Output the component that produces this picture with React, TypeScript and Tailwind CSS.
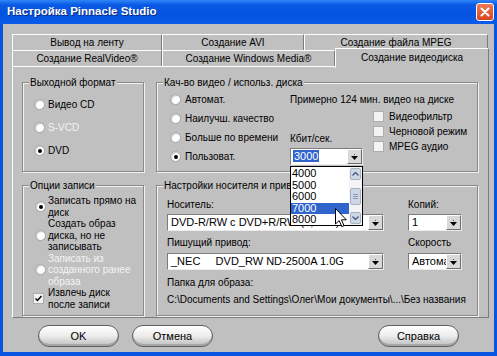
import React from 'react'

const grey = 'bg-[#c0c0c0]'

function Radio({ checked }: { checked?: boolean }) {
  return (
    <span className="w-[11px] h-[11px] rounded-full bg-white border border-[#a4a4a4] shadow-[inset_1px_1px_1px_#c8c8c8] flex items-center justify-center shrink-0">
      {checked && <span className="w-[4px] h-[4px] rounded-full bg-black" />}
    </span>
  )
}

function Check({ checked }: { checked?: boolean }) {
  return (
    <span className="w-[11px] h-[11px] bg-[#f3f3f3] border border-[#adadad] flex items-center justify-center shrink-0">
      {checked && (
        <svg width="7" height="7" viewBox="0 0 7 7">
          <path d="M0.5 3.5 L2.5 5.5 L6.5 1" stroke="#000" strokeWidth="1.5" fill="none" />
        </svg>
      )}
    </span>
  )
}

function DropBtn() {
  return (
    <span className="w-[15px] h-full bg-[#d8d8d8] border border-t-white border-l-white border-r-[#6e6e6e] border-b-[#6e6e6e] flex flex-col items-center justify-center shrink-0">
      <span className="w-[1px] h-[1px] bg-[#555] mb-[1px]" />
      <svg width="7" height="4" viewBox="0 0 7 4">
        <path d="M0 0 H7 L3.5 4 Z" fill="#000" />
      </svg>
    </span>
  )
}

function Combo({ value, children, wide }: { value: React.ReactNode; children?: React.ReactNode; wide?: boolean }) {
  return (
    <div
      className={
        wide
          ? 'relative h-[17px] w-full bg-white border border-t-[#7c7c7c] border-l-[#7c7c7c] border-r-[#ececec] border-b-[#ececec] flex items-center text-[11px]'
          : 'relative h-[17px] w-[54px] bg-white border border-t-[#7c7c7c] border-l-[#7c7c7c] border-r-[#ececec] border-b-[#ececec] flex items-center text-[11px]'
      }
    >
      <span className="flex-1 pl-[3px] overflow-hidden whitespace-pre leading-[13px]">{value}</span>
      <DropBtn />
      {children}
    </div>
  )
}

function Group({ label, children, className }: { label: string; children: React.ReactNode; className?: string }) {
  return (
    <div className={`relative border border-[#8a8a8a] shadow-[inset_1px_1px_0_#f2f2f2,1px_1px_0_#f2f2f2] ${className ?? ''}`}>
      <span className="absolute -top-[7px] left-[6px] px-[1px] bg-[#c0c0c0] leading-[13px] whitespace-nowrap">{label}</span>
      {children}
    </div>
  )
}

function Tab({ label, w }: { label: string; w: string }) {
  return (
    <div className={`${w} h-[16px] border-t border-l border-t-white border-l-white border-r border-r-[#7c7c7c] flex items-center justify-center leading-[13px] whitespace-nowrap`}>
      {label}
    </div>
  )
}

function Button({ label }: { label: string }) {
  return (
    <button className="w-[81px] h-[22px] rounded-[11px] border border-[#5e5e5e] bg-gradient-to-b from-white via-[#ececec] to-[#bdbdbd] shadow-[inset_0_-2px_0_#a6a6a6,inset_0_1px_0_#fff] leading-[13px] text-black text-[11px]">
      {label}
    </button>
  )
}

function ScrollBtn({ up }: { up?: boolean }) {
  return (
    <span className="h-[12px] mx-[1px] rounded-[2px] bg-[#cfd6e4] border border-[#a7b1c6] flex items-center justify-center">
      <svg width="7" height="4" viewBox="0 0 7 4">
        <path d={up ? 'M0.5 3.5 L3.5 0.5 L6.5 3.5' : 'M0.5 0.5 L3.5 3.5 L6.5 0.5'} stroke="#4a5e86" strokeWidth="1.4" fill="none" />
      </svg>
    </span>
  )
}

export default function App() {
  return (
    <div className="w-[497px] h-[356px] bg-[#0a55df] flex flex-col font-['Liberation_Sans',Arial,sans-serif] text-[10px] text-black overflow-hidden">
      {/* Title bar */}
      <div className="h-[24px] shrink-0 bg-[linear-gradient(180deg,#2f86f6_0%,#0a5ae6_20%,#0453e0_60%,#0a5ce8_100%)] flex items-center justify-between pl-[7px] pr-[3px]">
        <span className="text-white font-bold text-[11.5px] [text-shadow:1px_1px_0_#0b2a80]">Настройка Pinnacle Studio</span>
        <span className="w-[18px] h-[18px] rounded-[3px] border border-white bg-gradient-to-b from-[#ec7a55] to-[#d8431d] flex items-center justify-center">
          <svg width="10" height="10" viewBox="0 0 10 10">
            <path d="M1.5 1.5 L8.5 8.5 M8.5 1.5 L1.5 8.5" stroke="#fff" strokeWidth="2" strokeLinecap="round" />
          </svg>
        </span>
      </div>

      {/* Body */}
      <div className={`flex-1 ${grey} mx-[3px] mb-[4px] pt-[10px] pl-[9px] pr-[5px] flex flex-col`}>
        {/* Tabs */}
        <div className="flex">
          <Tab label="Вывод на ленту" w="w-[150px]" />
          <Tab label="Создание AVI" w="w-[142px]" />
          <Tab label="Создание файла MPEG" w="w-[184px]" />
        </div>
        <div className="flex items-end h-[16px]">
          <Tab label="Создание RealVideo®" w="w-[150px]" />
          <Tab label="Создание Windows Media®" w="w-[173px]" />
          <div className="relative z-10 w-[154px] h-[20px] -mb-[2px] bg-[#c0c0c0] border-t border-l border-t-white border-l-white border-r border-r-[#7c7c7c] flex items-center justify-center leading-[13px] pb-[2px]">
            Создание видеодиска
          </div>
        </div>

        {/* Panel */}
        <div className="h-[252px] border border-t-white border-l-white border-r-[#7c7c7c] border-b-[#7c7c7c] pt-[15px] pl-[9px] pr-[10px] grid grid-cols-[122px_322px] grid-rows-[90px_131px] gap-x-[12px] gap-y-[13px]">
          <Group label="Выходной формат" className="pt-[10px] pl-[11px]">
            <div className="flex flex-col">
              <div className="h-[23px] flex items-center gap-[3px]"><Radio />Видео CD</div>
              <div className="h-[23px] flex items-center gap-[3px] text-[#f4f4f4]"><Radio />S-VCD</div>
              <div className="h-[23px] flex items-center gap-[3px]"><Radio checked />DVD</div>
            </div>
          </Group>

          <Group label="Кач-во видео / использ. диска" className="z-20 pt-[7px] pl-[13px] flex">
            <div className="w-[120px] flex flex-col">
              <div className="h-[19px] flex items-center gap-[4px]"><Radio />Автомат.</div>
              <div className="h-[19px] flex items-center gap-[4px]"><Radio />Наилучш. качество</div>
              <div className="h-[19px] flex items-center gap-[4px] whitespace-nowrap"><Radio />Больше по времени</div>
              <div className="h-[19px] flex items-center gap-[4px]"><Radio checked />Пользоват.</div>
            </div>
            <div className="flex flex-col">
              <div className="h-[19px] flex items-center whitespace-nowrap">Примерно 124 мин. видео на диске</div>
              <div className="flex">
                <div className="w-[83px] flex flex-col">
                  <span className="mt-[23px] leading-[13px]">Кбит/сек.</span>
                  <div className="mt-[3px] w-[73px]">
                    <Combo wide value={<span className="bg-[#2f64cc] text-white px-[1px] -ml-[1px]">3000</span>}>
                      {/* Open list */}
                      <div className="absolute left-[-1px] top-[17px] w-[73px] h-[60px] bg-white border border-black flex z-30">
                        <div className="flex-1 flex flex-col pt-[1px]">
                          <span className="h-[11.5px] leading-[11.5px] pl-[1px]">4000</span>
                          <span className="h-[11.5px] leading-[11.5px] pl-[1px]">5000</span>
                          <span className="h-[11.5px] leading-[11.5px] pl-[1px]">6000</span>
                          <span className="h-[11.5px] leading-[11.5px] pl-[1px] bg-[#2f64cc] text-white">7000</span>
                          <span className="h-[11.5px] leading-[11.5px] pl-[1px]">8000</span>
                        </div>
                        <div className="w-[13px] flex flex-col justify-between py-[1px] bg-[#f4f4f6]">
                          <ScrollBtn up />
                          <span className="h-[17px] mx-[1px] rounded-[2px] bg-[#cfd6e4] border border-[#a7b1c6] flex flex-col items-center justify-center gap-[1px]">
                            <span className="w-[5px] h-[1px] bg-[#8a9bbd]" />
                            <span className="w-[5px] h-[1px] bg-[#8a9bbd]" />
                            <span className="w-[5px] h-[1px] bg-[#8a9bbd]" />
                          </span>
                          <ScrollBtn />
                        </div>
                        {/* Mouse pointer */}
                        <svg className="absolute left-[44px] top-[41px]" width="12" height="20" viewBox="0 0 12 20">
                          <path d="M0.5 0.5 L0.5 16 L4.2 12.6 L6.8 18.6 L9 17.6 L6.5 11.8 L11.3 11.8 Z" fill="#fff" stroke="#000" strokeWidth="1" />
                        </svg>
                      </div>
                    </Combo>
                  </div>
                </div>
                <div className="flex flex-col">
                  <div className="h-[15px] flex items-center gap-[5px] whitespace-nowrap"><Check />Видеофильтр</div>
                  <div className="h-[15px] flex items-center gap-[5px] whitespace-nowrap"><Check />Черновой режим</div>
                  <div className="h-[15px] flex items-center gap-[5px] whitespace-nowrap"><Check />MPEG аудио</div>
                </div>
              </div>
            </div>
          </Group>

          <Group label="Опции записи" className="pt-[9px] pl-[12px]">
            <div className="flex flex-col leading-[11.5px] whitespace-nowrap">
              <div className="flex items-center gap-[2px]">
                <Radio checked />
                <span>Записать прямо на<br />диск</span>
              </div>
              <div className="flex items-center gap-[2px]">
                <Radio />
                <span>Создать образ<br />диска, но не<br />записывать</span>
              </div>
              <div className="flex items-center gap-[2px] text-[#f4f4f4]">
                <Radio />
                <span>Записать из<br />созданного ранее<br />образа</span>
              </div>
              <div className="flex items-center gap-[4px] -ml-[2px]">
                <Check checked />
                <span>Извлечь диск<br />после записи</span>
              </div>
            </div>
          </Group>

          <Group label="Настройки носителя и привода" className="pt-[12px] pl-[10px]">
            <div className="grid grid-cols-[217px_54px] gap-x-[24px]">
              <div className="flex flex-col">
                <span className="leading-[13px]">Носитель:</span>
                <div className="mt-[3px]"><Combo wide value="DVD-R/RW с DVD+R/RW (4,7 ГБ)" /></div>
                <span className="mt-[5px] leading-[13px]">Пишущий привод:</span>
                <div className="mt-[4px]"><Combo wide value={'_NEC     DVD_RW ND-2500A 1.0G'} /></div>
              </div>
              <div className="flex flex-col">
                <span className="leading-[13px]">Копий:</span>
                <div className="mt-[3px]"><Combo value="1" /></div>
                <span className="mt-[5px] leading-[13px]">Скорость</span>
                <div className="mt-[4px]"><Combo value="Автомат" /></div>
              </div>
            </div>
            <div className="mt-[6px] leading-[13px]">Папка для образа:</div>
            <div className="mt-[4px] leading-[13px] whitespace-nowrap">C:\Documents and Settings\Олег\Мои документы\...\Без названия</div>
          </Group>
        </div>

        {/* Buttons */}
        <div className="mt-[7px] pl-[26px] pr-[30px] flex justify-between">
          <div className="flex gap-[13px]">
            <Button label="OK" />
            <Button label="Отмена" />
          </div>
          <Button label="Справка" />
        </div>
      </div>
    </div>
  )
}
